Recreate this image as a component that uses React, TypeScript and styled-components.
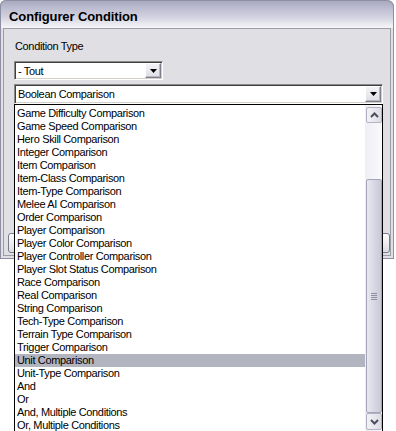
import React, { FC } from 'react'
import styled, { createGlobalStyle } from 'styled-components'

const conditionTypes = [
  'Game Difficulty Comparison',
  'Game Speed Comparison',
  'Hero Skill Comparison',
  'Integer Comparison',
  'Item Comparison',
  'Item-Class Comparison',
  'Item-Type Comparison',
  'Melee AI Comparison',
  'Order Comparison',
  'Player Comparison',
  'Player Color Comparison',
  'Player Controller Comparison',
  'Player Slot Status Comparison',
  'Race Comparison',
  'Real Comparison',
  'String Comparison',
  'Tech-Type Comparison',
  'Terrain Type Comparison',
  'Trigger Comparison',
  'Unit Comparison',
  'Unit-Type Comparison',
  'And',
  'Or',
  'And, Multiple Conditions',
  'Or, Multiple Conditions',
]

const selected = 'Unit Comparison'

const DownTriangle: FC = () => (
  <svg width="7" height="4" viewBox="0 0 7 4">
    <polygon points="0,0 7,0 3.5,4" fill="#000" />
  </svg>
)

const Chevron: FC<{ up?: boolean }> = ({ up }) => (
  <svg width="9" height="6" viewBox="0 0 9 6">
    <polyline
      points={up ? '1,5 4.5,1.5 8,5' : '1,1 4.5,4.5 8,1'}
      fill="none"
      stroke="#4d4d60"
      strokeWidth="2"
    />
  </svg>
)

export default function App() {
  return (
    <Page>
      <GlobalStyle />
      <Window>
        <TitleBar>Configurer Condition</TitleBar>
        <Panel>
          <Label>Condition Type</Label>
          <Combo width={149} top={8}>
            <ComboText>- Tout</ComboText>
            <DropButton>
              <DownTriangle />
            </DropButton>
          </Combo>
          <ComboHolder>
            <Combo width={369} top={4} tall>
              <ComboText>Boolean Comparison</ComboText>
              <DropButton>
                <DownTriangle />
              </DropButton>
            </Combo>
            <DropList>
              <Items>
                {conditionTypes.map((c) => (
                  <Item key={c} active={c === selected}>
                    {c}
                  </Item>
                ))}
              </Items>
              <ScrollBar>
                <ScrollButton>
                  <Chevron up />
                </ScrollButton>
                <Track />
                <Thumb>
                  <Grip />
                </Thumb>
                <ScrollButton down>
                  <Chevron />
                </ScrollButton>
              </ScrollBar>
            </DropList>
          </ComboHolder>
          {/* buttons sit behind the open list, only their edges show */}
          <ButtonRow>
            <PushButton />
            <PushButton />
          </ButtonRow>
        </Panel>
      </Window>
    </Page>
  )
}

const GlobalStyle = createGlobalStyle`
  html, body {
    margin: 0;
    padding: 0;
    background: #ffffff;
  }
  body {
    font-family: "Liberation Sans", Arial, sans-serif;
    font-size: 11px;
    letter-spacing: -0.35px;
    color: #000;
  }
`

const Page = styled.div`
  width: 396px;
  height: 431px;
  overflow: hidden;
  background: #ffffff;
`

const Window = styled.div`
  box-sizing: border-box;
  width: 394px;
  height: 259px;
  display: flex;
  flex-direction: column;
  padding: 0 2px 2px 2px;
  border: 1px solid #8e8ea4;
  border-top: none;
  border-radius: 6px 7px 0 0;
  background: #e0dfe3;
`

const TitleBar = styled.div`
  height: 28px;
  margin: 0 -3px;
  padding-left: 8px;
  box-sizing: border-box;
  display: flex;
  align-items: center;
  padding-top: 3px;
  border: 1px solid #8e8ea4;
  border-bottom: none;
  border-radius: 6px 7px 0 0;
  background: linear-gradient(
    to bottom,
    #a9a9bf 0%,
    #bcbcd0 25%,
    #d2d2e0 60%,
    #ececf2 88%,
    #f6f6f9 100%
  );
  font-family: "Liberation Sans", Arial, sans-serif;
  font-weight: bold;
  font-size: 13px;
  letter-spacing: -0.1px;
  color: #000;
`

const Panel = styled.div`
  flex: 1;
  display: flex;
  flex-direction: column;
  align-items: flex-start;
  padding: 11px 7px 0 10px;
  border: 1px solid #9d9da8;
`

const Label = styled.div`
  line-height: 13px;
  margin-left: 1px;
`

const ComboHolder = styled.div`
  position: relative;
  z-index: 2;
`

const Combo = styled.div<{ width: number; top: number; tall?: boolean }>`
  box-sizing: border-box;
  width: ${(p) => p.width}px;
  height: ${(p) => (p.tall ? 20 : 19)}px;
  margin-top: ${(p) => p.top}px;
  display: flex;
  align-items: center;
  justify-content: space-between;
  padding: 0 1px 0 3px;
  background: #ffffff;
  border: 1px solid;
  border-color: #8a8a8a #ffffff #ffffff #8a8a8a;
  box-shadow: inset 1px 1px 0 #404040, inset -1px -1px 0 #d4d0c8;
`

const ComboText = styled.span`
  line-height: 13px;
  padding-top: 1px;
`

const DropButton = styled.div`
  box-sizing: border-box;
  width: 16px;
  height: calc(100% - 2px);
  display: flex;
  align-items: center;
  justify-content: center;
  background: linear-gradient(to bottom, #f4f4f7, #dedee6);
  border: 1px solid;
  border-color: #ffffff #7d7d8c #7d7d8c #ffffff;
  box-shadow: inset -1px -1px 0 #b8b8c6;
`

const DropList = styled.div`
  position: absolute;
  top: 100%;
  left: 0;
  width: 369px;
  box-sizing: border-box;
  display: flex;
  border: 1px solid #000;
  background: #ffffff;
`

const Items = styled.div`
  flex: 1;
  padding-top: 2px;
`

const Item = styled.div<{ active?: boolean }>`
  height: 13px;
  line-height: 13px;
  padding-left: 2px;
  white-space: nowrap;
  background: ${(p) => (p.active ? '#b2b4bf' : 'transparent')};
`

const ScrollBar = styled.div`
  width: 17px;
  display: flex;
  flex-direction: column;
  align-items: flex-end;
  padding-top: 2px;
  background: linear-gradient(to right, #eeeef4, #fafafc);
`

const ScrollButton = styled.div<{ down?: boolean }>`
  box-sizing: border-box;
  width: 16px;
  height: ${(p) => (p.down ? 17 : 16)}px;
  display: flex;
  align-items: center;
  justify-content: center;
  border: 1px solid #b2b2c4;
  border-radius: 2px;
  background: linear-gradient(to right, #f2f2f6, #dcdce6);
`

const Track = styled.div`
  height: 56px;
`

const Thumb = styled.div`
  box-sizing: border-box;
  width: 16px;
  height: 234px;
  display: flex;
  align-items: center;
  justify-content: center;
  border: 1px solid #a4a4ba;
  border-radius: 2px;
  background: linear-gradient(to right, #e8e8f0 0%, #d8d8e4 50%, #c8c8d8 100%);
`

const Grip = styled.div`
  width: 6px;
  height: 7px;
  background: repeating-linear-gradient(
    to bottom,
    #8e8ea4 0px,
    #8e8ea4 1px,
    transparent 1px,
    transparent 2px
  );
`

const ButtonRow = styled.div`
  align-self: stretch;
  margin: auto -7px 2px -6px;
  display: flex;
  justify-content: space-between;
`

const PushButton = styled.div`
  box-sizing: border-box;
  width: 75px;
  height: 20px;
  border: 1px solid #7b7b8e;
  border-radius: 3px;
  background: linear-gradient(to bottom, #ffffff, #dcdce4);
`
